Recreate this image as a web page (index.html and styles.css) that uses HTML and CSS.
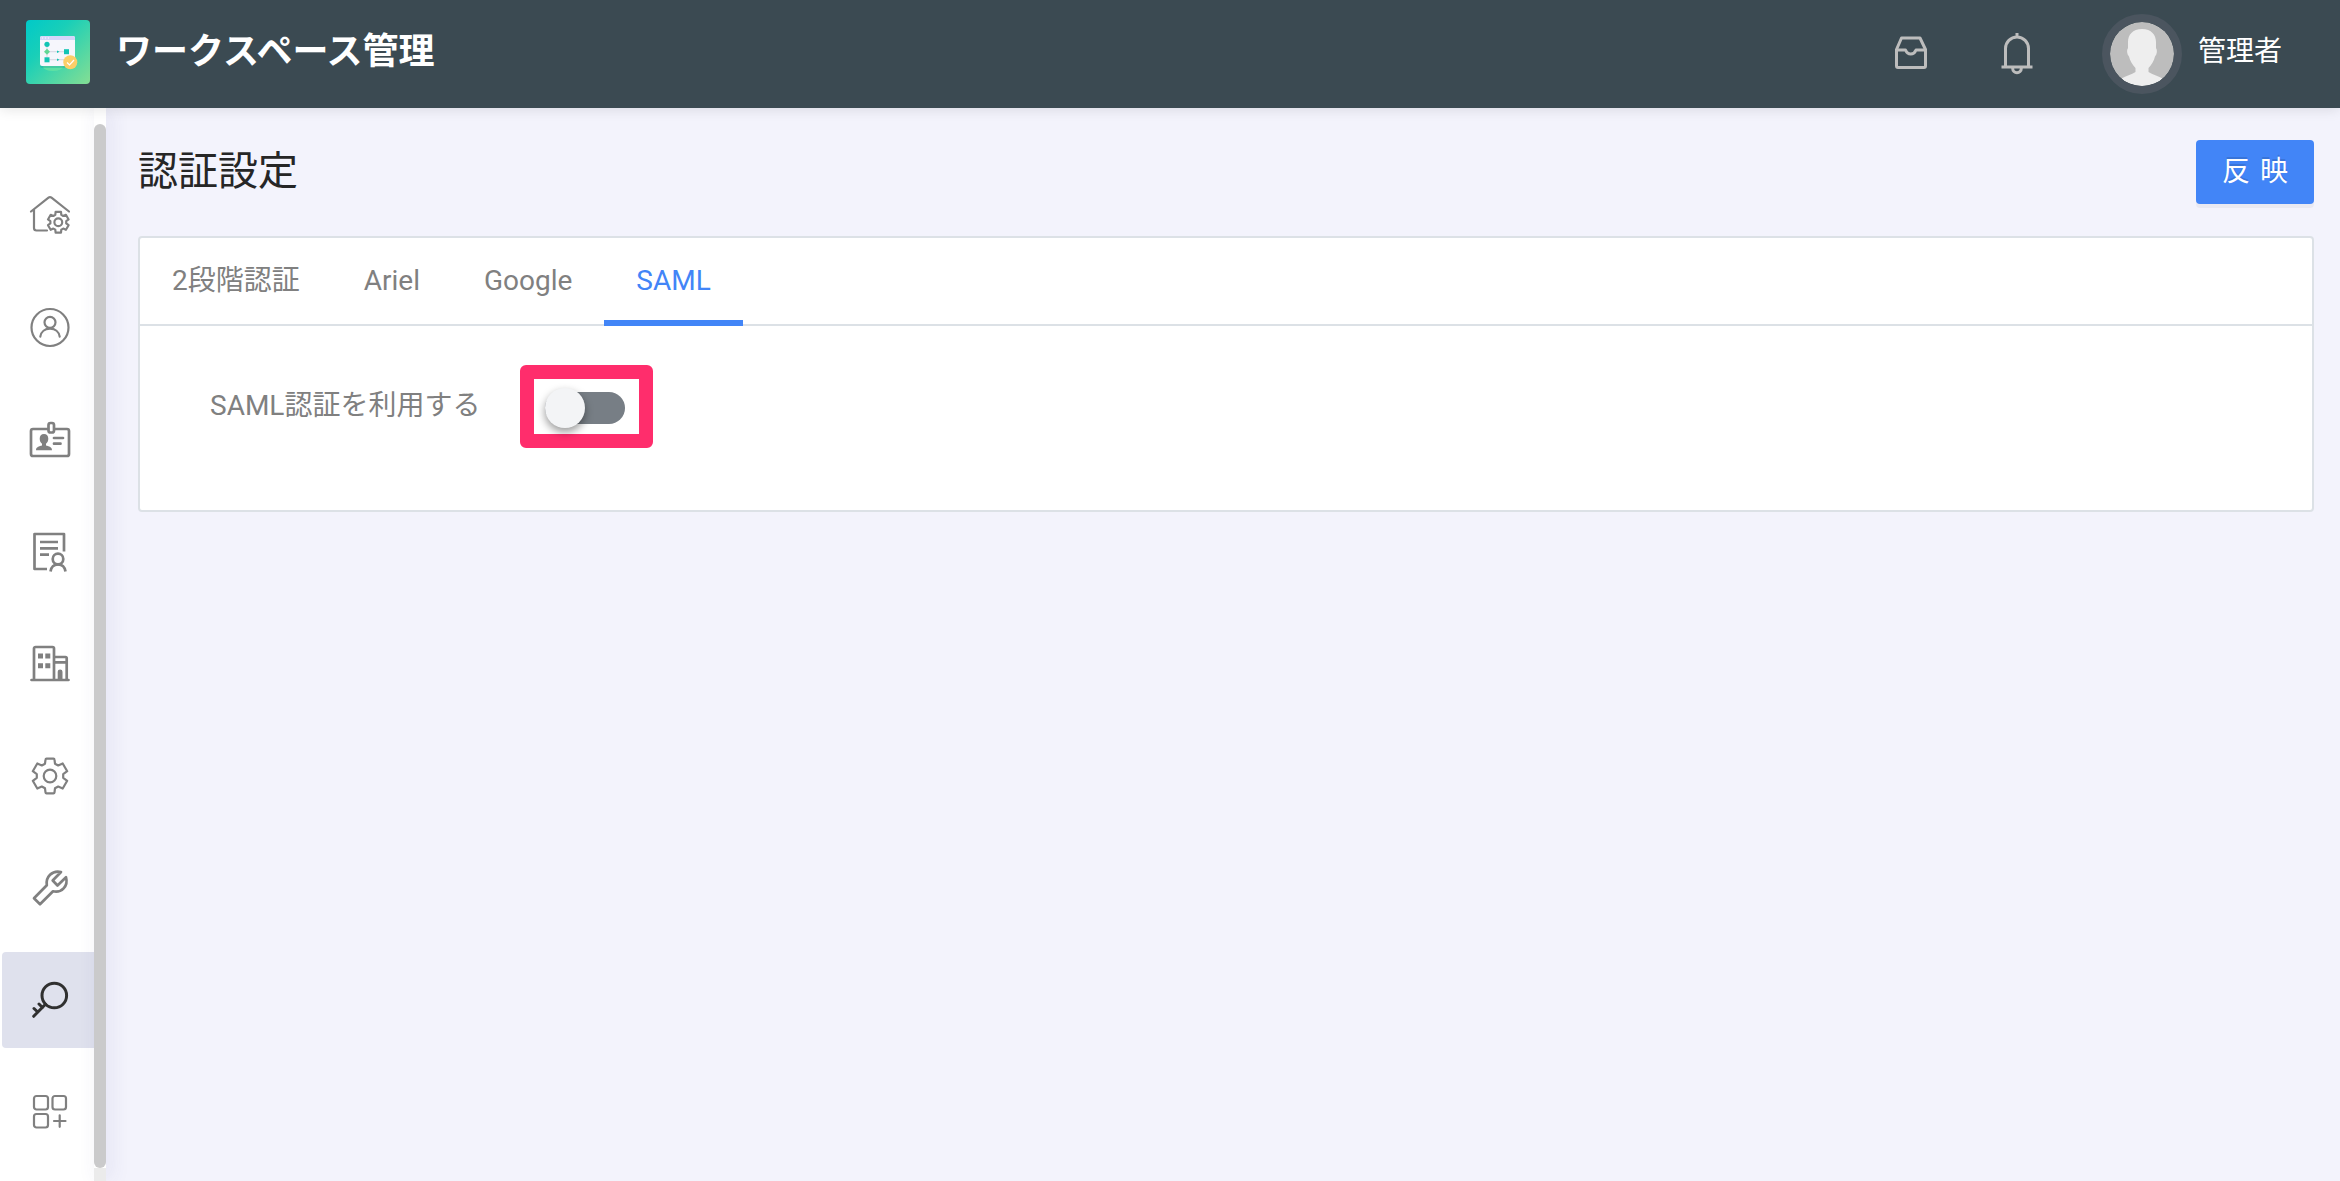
FILE: index.html
```html
<!DOCTYPE html>
<html lang="ja">
<head>
	<meta charset="UTF-8">
	<meta name="viewport" content="width=device-width, initial-scale=1.0">
	<title>ワークスペース管理</title>
	<link rel="stylesheet" href="styles.css">
</head>
<body>
	<header class="header">
		<svg class="logo" viewBox="0 0 64 64" aria-hidden="true">
			<defs>
				<linearGradient id="logoBg" x1="0" y1="0" x2="1" y2="1">
					<stop offset="0" stop-color="#00c9c9"/>
					<stop offset="0.35" stop-color="#19cfb8"/>
					<stop offset="1" stop-color="#85de93"/>
				</linearGradient>
			</defs>
			<rect width="64" height="64" rx="4" fill="url(#logoBg)"/>
			<ellipse cx="27" cy="47" rx="10" ry="4" fill="#5fe0a4"/>
			<rect x="14" y="18" width="35" height="30" rx="2" fill="#0a9a9a" opacity="0.3"/>
			<rect x="14" y="16" width="35" height="30" rx="2" fill="#f6f6fc"/>
			<path d="M14 20v-2a2 2 0 0 1 2-2h31a2 2 0 0 1 2 2v2z" fill="#d5d6fa"/>
			<path d="M16 18h1M19 18h1M22 18h1" stroke="#fff" stroke-width="1"/>
			<path d="M21 24v16M21 31.700h19M21 39.700h19" stroke="#c9c9d6" stroke-width="0.700" fill="none"/>
			<circle cx="21" cy="24.300" r="2.600" fill="#12c4b4"/>
			<path d="M21 28.700l3 3-3 3-3-3z" fill="#62d796"/>
			<rect x="18.500" y="37.300" width="5" height="5" fill="#12c4b4"/>
			<rect x="38" y="29.200" width="5" height="5" fill="#12c4b4"/>
			<path d="M31 30.500l2.500 1.200-2.500 1.200zM31 38.500l2.500 1.200-2.500 1.200z" fill="#12c4b4"/>
			<circle cx="44.300" cy="42.300" r="7" fill="#fcce68"/>
			<path d="M41 42.500l2.500 2.500 4.500-5" fill="none" stroke="#fff" stroke-width="1.200"/>
		</svg>
		<h1 class="app-title">ワークスペース管理</h1>
		<div class="header-menu">
			<button class="icon-button" type="button" aria-label="受信箱">
				<svg class="header-icon" viewBox="0 0 40 44">
					<path d="M9.500 6h18.500l5.500 11.500V34a1.500 1.500 0 0 1-1.500 1.500H6A1.500 1.500 0 0 1 4.500 34V17.500z"/>
					<path d="M4.500 18h9c1 2.500 3 4 5.300 4s4.200-1.500 5.200-4h9.500"/>
				</svg>
			</button>
			<button class="icon-button" type="button" aria-label="通知">
				<svg class="header-icon" viewBox="0 0 40 44">
					<path d="M8.500 35V16.500a11.500 11.500 0 0 1 23 0V35M4.500 35h31M20 1v4M15.700 36.500a4.300 4.300 0 0 0 8.600 0"/>
				</svg>
			</button>
			<button class="user-button" type="button">
				<svg class="avatar" viewBox="0 0 64 64" aria-hidden="true">
					<clipPath id="round"><circle cx="32" cy="32" r="32"/></clipPath>
					<g clip-path="url(#round)">
						<rect width="64" height="64" fill="#bdbdbd"/>
						<path d="M32 7c-9.500 0-14 6-14 13v6c-1.500 2-1.200 6 1 8.500 1 4.500 3.500 8.500 6.500 11.500v4c-4 3-9.500 3.500-14 6.500V64h41v-7.500c-4.500-3-10-3.500-14-6.500v-4c3-3 5.500-7 6.500-11.500 2.200-2.500 2.500-6.500 1-8.500v-6c0-7-4.500-13-14-13z" fill="#eeeeee"/>
					</g>
				</svg>
				<span class="user-name">管理者</span>
			</button>
		</div>
	</header>
	<div class="layout">
		<nav class="sidebar">
			<a class="nav-item" href="#" aria-label="ホーム">
				<svg class="nav-icon" viewBox="0 0 40 40">
					<path d="M1 15.500L18.500 1.700q1.500-1.200 3 0L39 15.500M4 13.500V32q0 2.500 2.500 2.500H17"/>
					<g transform="translate(28.300 26.300) scale(0.600)" stroke-width="3.600">
						<path d="M-5 -12.300L-4.500 -17.300H4.500L5 -12.300 8.200 -10.500 12.700 -12.500 17.200 -4.800 13.200 -1.800V1.800L17.200 4.800 12.700 12.500 8.200 10.500 5 12.300 4.500 17.300H-4.500L-5 12.300 -8.200 10.500 -12.700 12.500 -17.200 4.800 -13.200 1.800V-1.800L-17.200 -4.800 -12.700 -12.500 -8.200 -10.500Z"/>
						<circle r="6.500"/>
					</g>
				</svg>
			</a>
			<a class="nav-item" href="#" aria-label="ユーザー">
				<svg class="nav-icon" viewBox="0 0 40 40">
					<circle cx="20" cy="19.500" r="18.500"/>
					<circle cx="20" cy="14.300" r="5.500"/>
					<path d="M10.300 28.700C11 23.500 15 20.700 20 20.700s9 2.800 9.700 8"/>
				</svg>
			</a>
			<a class="nav-item" href="#" aria-label="社員証">
				<svg class="nav-icon heavy" viewBox="0 0 40 40">
					<path d="M18 9H3a2 2 0 0 0-2 2v23a2 2 0 0 0 2 2h34a2 2 0 0 0 2-2V11a2 2 0 0 0-2-2H25"/>
					<rect x="18.500" y="3" width="5.500" height="9.500" rx="2"/>
					<path d="M24 18h9M24 23.700h6.500"/>
					<path class="solid" d="M14 14c-2.800 0-4.300 2-4.300 4.800 0 2.200.9 3.900 2.300 5v1.700c-2.500.8-6 1.200-6 4.700h16c0-3.500-3.500-3.900-6-4.700v-1.700c1.400-1.100 2.300-2.800 2.300-5C18.300 16 16.800 14 14 14z"/>
				</svg>
			</a>
			<a class="nav-item" href="#" aria-label="申請">
				<svg class="nav-icon heavy square" viewBox="0 0 40 40">
					<path d="M17 37H4.500V2H34v17.500M10 10h18M10 16.300h18M10 22.700h9"/>
					<circle cx="28" cy="27" r="5.300"/>
					<path d="M20.500 39.500c.5-4.500 3.500-7.200 7.500-7.200s7 2.700 7.500 7.200"/>
				</svg>
			</a>
			<a class="nav-item" href="#" aria-label="会社">
				<svg class="nav-icon heavy" viewBox="0 0 40 40">
					<path d="M1.500 36h37M4 36V4.500A1.500 1.500 0 0 1 5.500 3h17A1.500 1.500 0 0 1 24 4.500V36M24 13h11.500q1.200 0 1.200 1.200V36M24 18.300h12"/>
					<path class="solid" d="M8 9.500h5v5H8zM15.300 9.500h5v5h-5zM8 19.300h5v5H8zM15.300 19.300h5v5h-5zM27.700 36v-8.200a2.400 2.400 0 0 1 4.800 0V36z"/>
				</svg>
			</a>
			<a class="nav-item" href="#" aria-label="設定">
				<svg class="nav-icon" viewBox="0 0 40 40">
					<g transform="translate(20 20)">
						<path d="M-5 -12.300L-4.500 -16.300Q-4.400 -17.300 -3.500 -17.300H3.500Q4.400 -17.300 4.500 -16.300L5 -12.300 8.200 -10.500 12.700 -12.500 17.200 -4.800 13.200 -1.800V1.800L17.200 4.800 12.700 12.500 8.200 10.500 5 12.300 4.500 16.300Q4.400 17.300 3.500 17.300H-3.500Q-4.400 17.300 -4.500 16.300L-5 12.300 -8.200 10.500 -12.700 12.500 -17.200 4.800 -13.200 1.800V-1.800L-17.200 -4.800 -12.700 -12.500 -8.200 -10.500Z"/>
						<circle r="6.300"/>
					</g>
				</svg>
			</a>
			<a class="nav-item" href="#" aria-label="ツール">
				<svg class="nav-icon heavy" viewBox="0 0 40 40">
					<path d="M4 30.300L16.800 17.300C15.500 9 22 2 31 4L22.700 12.500 27.500 17.500 36 9.300C38.500 18 31.500 25.300 23 23.300L10 36.300z"/>
				</svg>
			</a>
			<a class="nav-item active" href="#" aria-label="認証設定">
				<svg class="nav-icon" viewBox="0 0 40 40">
					<circle cx="24.300" cy="15.500" r="12.300"/>
					<path d="M15.500 24.300L3.700 36.300M12.500 27.500L9 24M7.700 32L4 28.500"/>
				</svg>
			</a>
			<a class="nav-item" href="#" aria-label="アプリ追加">
				<svg class="nav-icon" viewBox="0 0 40 40">
					<rect x="4" y="4" width="14" height="13.500" rx="2.500"/>
					<rect x="22.500" y="4" width="13.500" height="13.500" rx="2.500"/>
					<rect x="4" y="22" width="14" height="13.500" rx="2.500"/>
					<path d="M24 29h11.500M29.700 23.300v11.500"/>
				</svg>
			</a>
		</nav>
		<div class="scroll-track">
			<div class="scroll-thumb"></div>
			<div class="scroll-rest"></div>
		</div>
		<main class="content">
			<div class="page-head">
				<h2 class="page-title">認証設定</h2>
				<button class="apply-button" type="button"><span>反</span> <span>映</span></button>
			</div>
			<section class="card">
				<div class="tabs" role="tablist">
					<button class="tab" type="button" role="tab">2段階認証</button>
					<button class="tab" type="button" role="tab">Ariel</button>
					<button class="tab" type="button" role="tab">Google</button>
					<button class="tab selected" type="button" role="tab" aria-selected="true">SAML</button>
				</div>
				<div class="form-row">
					<label class="form-label" for="useSaml">SAML認証を利用する</label>
					<div class="highlight">
						<input class="switch" id="useSaml" type="checkbox" role="switch">
					</div>
				</div>
			</section>
		</main>
	</div>
</body>
</html>
```
FILE: styles.css
```css
* {
	box-sizing: border-box;
}
body {
	margin: 0;
	min-height: 100vh;
	display: flex;
	flex-direction: column;
	font-family: Roboto, "Noto Sans CJK JP", sans-serif;
	font-size: 28px;
	line-height: 40px;
	color: #808080;
	background-color: #f3f3fc;
}
button {
	font: inherit;
	color: inherit;
	background: none;
	border: 0;
	padding: 0;
	cursor: pointer;
}

/* header */
.header {
	position: relative;
	z-index: 2;
	display: flex;
	align-items: center;
	height: 108px;
	padding: 0 58px 0 26px;
	color: #ffffff;
	background-color: #3b4a52;
	box-shadow: 0 2px 12px rgba(0, 0, 0, 0.1);
}
.logo {
	width: 64px;
	height: 64px;
	margin-bottom: 4px;
}
.app-title {
	margin: 0 0 4px 26px;
	font-size: 36px;
	font-weight: bold;
}
.header-menu {
	display: flex;
	align-items: center;
	gap: 65px;
	margin-left: auto;
}
.icon-button {
	display: flex;
}
.header-icon {
	width: 40px;
	height: 44px;
	fill: none;
	stroke: #bdbdbd;
	stroke-width: 3;
	stroke-linejoin: round;
}
.user-button {
	display: flex;
	align-items: center;
	gap: 16px;
}
.avatar {
	width: 80px;
	height: 80px;
	border: 8px solid #4b555f;
	border-radius: 50%;
}
.user-name {
	margin-bottom: 4px;
}

/* sidebar */
.layout {
	flex: 1;
	display: flex;
}
.sidebar {
	display: flex;
	flex-direction: column;
	gap: 16px;
	width: 94px;
	padding: 60px 0 0 2px;
	background-color: #ffffff;
}
.nav-item {
	display: flex;
	align-items: center;
	height: 96px;
	padding-left: 28px;
	color: #808080;
	border-radius: 4px 0 0 4px;
}
.nav-item.active {
	color: #303030;
	background-color: #dfe1ed;
}
.nav-icon {
	width: 40px;
	height: 40px;
	overflow: visible;
	fill: none;
	stroke: currentColor;
	stroke-width: 2.2;
	stroke-linecap: round;
	stroke-linejoin: round;
}
.nav-icon.heavy {
	stroke-width: 2.7;
}
.nav-icon.square {
	stroke-linecap: butt;
}
.nav-item.active .nav-icon {
	stroke-width: 3;
}
.nav-icon .solid {
	fill: currentColor;
	stroke: none;
}
.scroll-track {
	display: flex;
	flex-direction: column;
	width: 12px;
	padding-top: 16px;
	background-color: #ffffff;
	box-shadow: 4px 0 20px rgba(60, 60, 140, 0.1);
}
.scroll-thumb {
	flex: 1;
	background-color: #cacacb;
	border-radius: 6px;
}
.scroll-rest {
	height: 13px;
	background-color: #ebebeb;
}

/* content */
.content {
	flex: 1;
	padding: 32px 26px 32px 32px;
}
.page-head {
	display: flex;
	justify-content: space-between;
	margin-bottom: 32px;
}
.page-title {
	margin: 0;
	font-size: 40px;
	font-weight: normal;
	line-height: 64px;
	color: #262626;
}
.apply-button {
	display: flex;
	align-items: center;
	justify-content: center;
	gap: 10px;
	width: 118px;
	height: 64px;
	color: #ffffff;
	background-color: #4285f7;
	border-radius: 4px;
	box-shadow: 0 4px 0 rgba(0, 0, 0, 0.04);
	text-shadow: 0 -2px 0 rgba(0, 0, 0, 0.12);
}
.card {
	background-color: #ffffff;
	border: 2px solid #dce1e6;
	border-radius: 4px;
}
.tabs {
	display: flex;
	height: 88px;
	border-bottom: 2px solid #dce1e6;
}
.tab {
	height: 88px;
	padding: 4px 32px 0;
	border-bottom: 6px solid transparent;
}
.tab.selected {
	color: #4285f7;
	border-bottom-color: #4285f7;
}
.form-row {
	display: flex;
	align-items: center;
	gap: 40px;
	padding: 39px 70px 62px;
}
.form-label {
	margin-bottom: 2px;
}
.highlight {
	display: flex;
	padding: 9px 14px 6px 11px;
	border: 14px solid #ff2d6c;
	border-radius: 6px;
}
/* the track is thinner than the knob */
.switch {
	appearance: none;
	display: flex;
	align-items: center;
	width: 80px;
	height: 32px;
	margin: 4px 0;
	background-color: #777e85;
	border-radius: 16px;
	cursor: pointer;
}
.switch::before {
	content: "";
	width: 40px;
	height: 40px;
	background-color: #f3f4f6;
	border-radius: 20px;
	box-shadow: 0 4px 8px rgba(0, 0, 0, 0.4);
}
.switch:checked {
	justify-content: flex-end;
	background-color: #4285f7;
}
```
